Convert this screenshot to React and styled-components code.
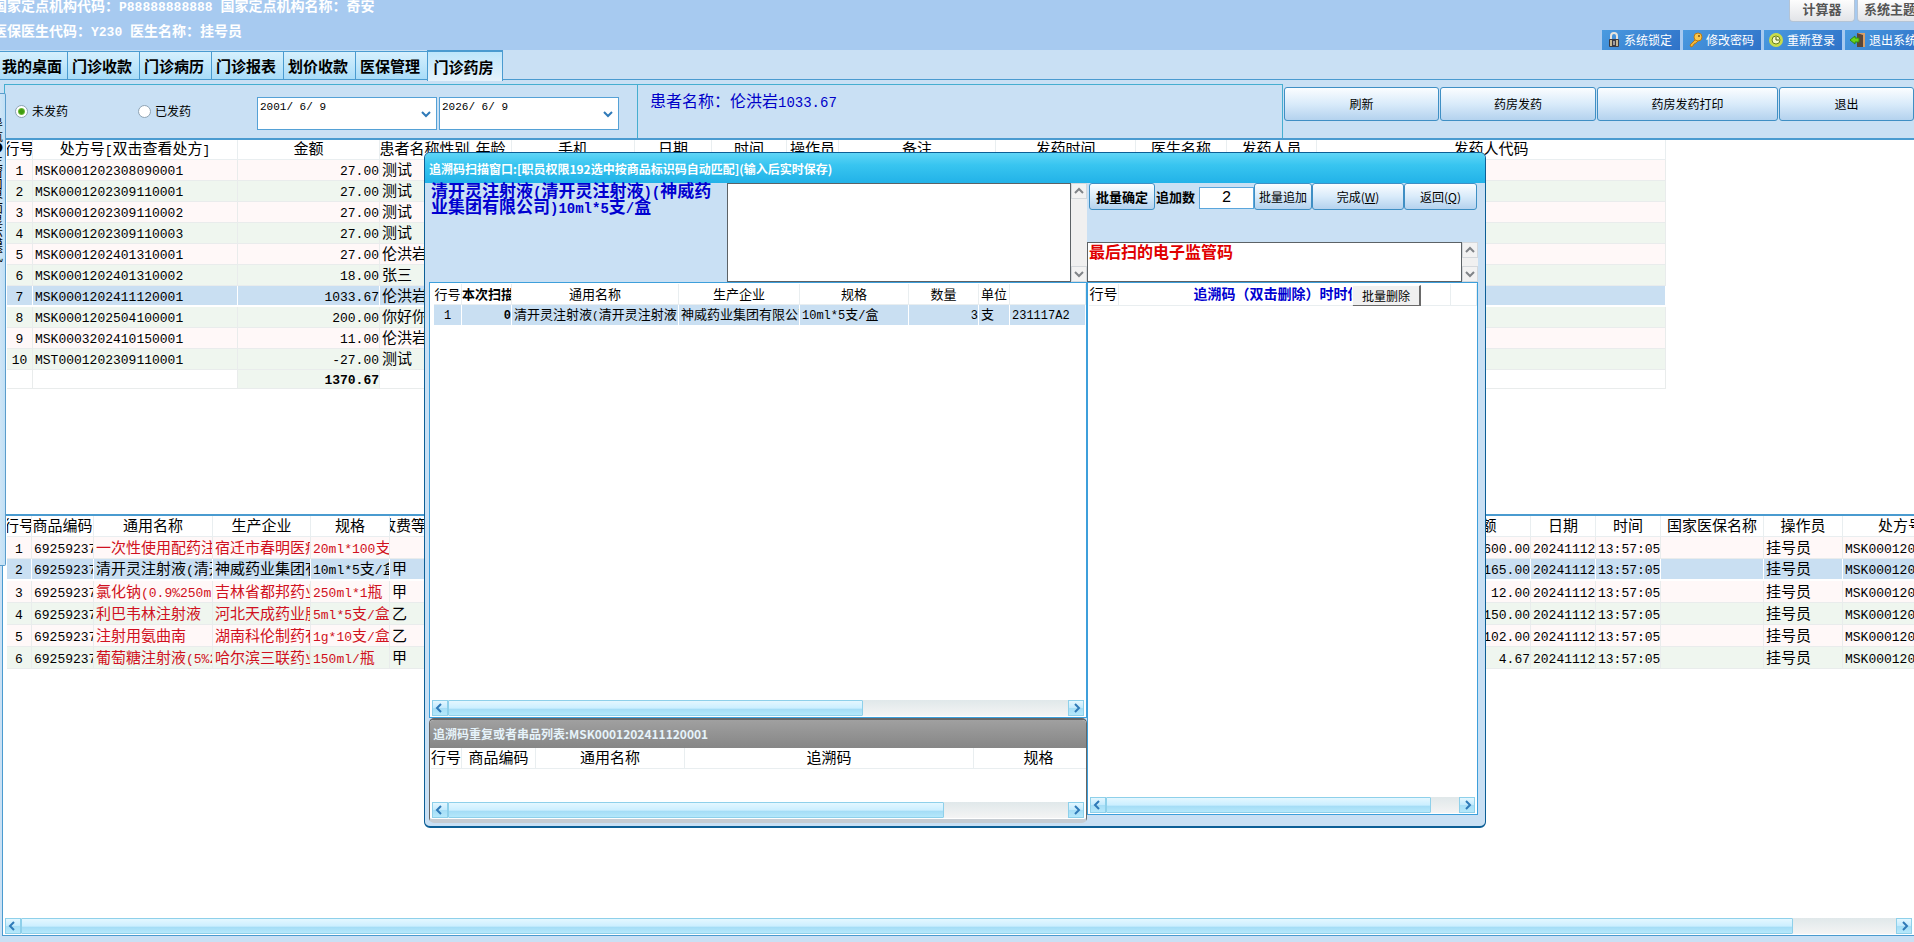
import React from "react";
import styled, { createGlobalStyle, css } from "styled-components";

const song = `"Liberation Serif", "Noto Sans CJK SC", serif`;
const hei = `"Noto Sans CJK SC", sans-serif`;
const mono = `"Liberation Mono", "Noto Sans CJK SC", monospace`;
const panel = "#c9e0f4";
const line = "#4a9bd0";

const Global = createGlobalStyle`
  * { box-sizing: border-box; }
  html, body { margin: 0; height: 100%; overflow: hidden; }
  body { font: 15px/20px ${song}; color: #000; background: ${panel}; }
  button, input, textarea { font: inherit; color: inherit; margin: 0; border-radius: 0; }
  button { cursor: pointer; white-space: nowrap; }
`;

const Latin = styled.span`
  font-family: ${mono};
  font-size: ${(p) => p.$size}px;
  line-height: 1;
  white-space: pre;
`;

/* Latin runs use the half-width face beside the full-width characters. */
function Text({ children, size = 13 }) {
  return String(children)
    .split(/([\x20-\x7e]+)/)
    .filter(Boolean)
    .map((part, i) =>
      /^[\x20-\x7e]/.test(part) ? (
        <Latin key={i} $size={size}>{part}</Latin>
      ) : (
        part
      )
    );
}

/* ---------- shell ---------- */

const Shell = styled.div`
  position: relative;
  display: flex;
  flex-direction: column;
  height: 100vh;
  overflow: hidden;
`;

const Header = styled.header`
  display: flex;
  flex: none;
  justify-content: space-between;
  height: 50px;
  background: #a7caf0;
`;

const Org = styled.div`
  display: flex;
  flex-direction: column;
  gap: 11px;
  margin-left: -7px;
  color: #fff;
  font-size: 14px;
  font-weight: bold;
  line-height: 14px;
  white-space: nowrap;
`;

const HeaderTools = styled.div`
  display: flex;
  flex-direction: column;
  align-items: flex-end;
  justify-content: space-between;
`;

const TopLinks = styled.div`
  display: flex;
  gap: 2px;
  width: 125px;
  overflow: hidden;
`;

const TopLink = styled.button`
  flex: none;
  width: 66px;
  height: 22px;
  padding: 0 0 4px;
  border: 1px solid #b4c4d6;
  border-top: 0;
  border-radius: 0 0 4px 4px;
  background: linear-gradient(#fdfdfd, #e2e4e8);
  color: #555;
  font: bold 13px/18px ${hei};
`;

const ToolLinks = styled.div`
  display: flex;
  gap: 3px;
  width: 312px;
  overflow: hidden;
`;

const ToolLink = styled.button`
  display: flex;
  flex: none;
  align-items: center;
  gap: 3px;
  width: 78px;
  height: 20px;
  padding: 0 0 0 5px;
  border: 0;
  background: linear-gradient(135deg, #4a9be0, #2f72c8);
  color: #fff;
  font: 12px/20px ${hei};
  svg { flex: none; }
`;

const Tabs = styled.nav`
  display: flex;
  flex: none;
  align-items: flex-end;
  height: 30px;
  border-bottom: 1px solid ${line};
`;

const Tab = styled.button`
  width: ${(p) => (p.$active ? 76 : 72)}px;
  height: ${(p) => (p.$active ? 31 : 28)}px;
  margin: ${(p) => (p.$active ? "0 0 -2px -1px" : "0")};
  padding: 0 3px 0 0;
  border: 1px solid ${line};
  border-width: ${(p) => (p.$active ? "2px 1px 0" : "1px 1px 0 0")};
  background: ${(p) => (p.$active ? "linear-gradient(#bde6fb, #e6f3fc)" : "linear-gradient(#d6f0fd, #a9dcf8)")};
  font: bold 15px/26px ${hei};
  &:first-child { width: 68px; }
`;

const Filters = styled.section`
  display: flex;
  flex: none;
  height: 54px;
  margin: 4px 0 0 4px;
`;

const FilterBox = styled.div`
  display: flex;
  width: 634px;
  padding-top: 12px;
  border: 1px solid #45aed0;
  border-width: 1px 1px 0 1px;
`;

const RadioLabel = styled.label`
  display: flex;
  align-items: center;
  gap: 4px;
  width: 123px;
  height: 28px;
  font: 12px/16px ${hei};
  &:first-child { margin-left: 10px; }
  & + & { width: 119px; }
  input {
    appearance: none;
    width: 13px;
    height: 13px;
    margin: 0;
    border: 1px solid #8fa4b4;
    border-radius: 50%;
    background: #fff;
  }
  input:checked { background: radial-gradient(#3f9c0e 0 2px, #6db83a 3px, #fff 4px); }
`;

const DateBox = styled.div`
  display: flex;
  width: 180px;
  height: 33px;
  margin-right: 2px;
  border: 1px solid #55a1d6;
  background: #fff;
  input {
    flex: 1;
    min-width: 0;
    height: 18px;
    padding: 0 2px;
    border: 0;
    background: none;
    font: 11px/18px ${mono};
  }
  button {
    display: flex;
    align-items: center;
    justify-content: center;
    width: 20px;
    padding: 0;
    border: 0;
    background: none;
  }
`;

const Patient = styled.div`
  flex: 1;
  min-width: 0;
  padding: 7px 12px;
  border: 1px solid #45aed0;
  border-width: 1px 1px 0 0;
  color: #0000c8;
  font-size: 16px;
  white-space: nowrap;
`;

const Actions = styled.div`
  display: flex;
  gap: 1px;
  padding: 3px 0 0 1px;
`;

const Push = styled.button`
  flex: none;
  width: ${(p) => p.$w}px;
  height: ${(p) => p.$h || 27}px;
  padding: 0;
  border: 1px solid #3f8fc4;
  border-radius: 3px;
  background: linear-gradient(#fbfdff, #d9ebfa 50%, #b4d2ee);
  font: ${(p) => (p.$bold ? "bold" : "normal")} ${(p) => p.$size || 12}px/20px ${hei};
`;

const Work = styled.main`
  display: flex;
  flex: 1;
  flex-direction: column;
  min-height: 0;
  margin: 0 0 6px 2px;
  border: 1px solid ${line};
  border-width: 0 0 1px 1px;
  background: #fff;
`;

const Upper = styled.section`
  flex: 0 0 376px;
  overflow: hidden;
  padding-left: 4px;
  border-top: 2px solid ${line};
`;

const Lower = styled(Upper)`
  flex: 1;
  min-height: 0;
`;

const SideStrip = styled.aside`
  position: absolute;
  top: 93px;
  left: 0;
  display: flex;
  flex-direction: column;
  align-items: flex-end;
  width: 6px;
  height: 473px;
  padding: 24px 2px 0 0;
  overflow: hidden;
  border: 1px solid #5b9ccb;
  border-left: 0;
  border-radius: 0 2px 2px 0;
  background: linear-gradient(90deg, #cfe5f6, #c0e0f6);
  font: 12px/12px ${hei};
`;

/* ---------- tables ---------- */

const stripe = { pink: "#fff8f8", green: "#eff6ef", blue: "#c9dff2" };

const Grid = styled.table`
  width: ${(p) => p.$w}px;
  table-layout: fixed;
  border-collapse: separate;
  border-spacing: 0;
  font-size: ${(p) => p.$size || 15}px;
  line-height: 19px;
`;

const Th = styled.th`
  height: ${(p) => p.$h || 21}px;
  padding: 0;
  overflow: hidden;
  border: 1px solid #e9eef0;
  border-width: 0 1px 1px 0;
  color: ${(p) => p.$color || "#000"};
  font-weight: ${(p) => (p.$bold ? "bold" : "normal")};
  white-space: nowrap;
`;

const HeadText = styled.span`
  display: flex;
  justify-content: ${(p) => p.$justify || "center"};
`;

const Tr = styled.tr`
  height: ${(p) => p.$h}px;
  background: ${(p) => stripe[p.$tone] || "#fff"};
`;

const Td = styled.td`
  padding: 0 0 0 ${(p) => (p.$align ? 0 : 2)}px;
  overflow: hidden;
  border: 1px solid ${(p) => (p.$sel ? "#fff" : "#e9ecec")};
  border-width: 0 1px 1px 0;
  ${(p) => p.$sel && css`border-bottom-width: 2px;`}
  background: ${(p) => stripe[p.$tone] || "transparent"};
  color: ${(p) => p.$color || "#000"};
  font-weight: ${(p) => (p.$bold ? "bold" : "normal")};
  line-height: 18px;
  text-align: ${(p) => p.$align || "left"};
  white-space: nowrap;
`;

function Cols({ widths }) {
  return <colgroup>{widths.map((w, i) => <col key={i} width={w} />)}</colgroup>;
}

/* ---------- scroll bars ---------- */

const HBar = styled.div`
  display: flex;
  flex: none;
  height: 16px;
  margin: 0 2px 1px 2px;
  background: linear-gradient(#e0e8ea, #f4f4f4);
`;

const HEnd = styled.button`
  display: flex;
  flex: none;
  align-items: center;
  justify-content: center;
  width: 16px;
  padding: 0;
  border: 1px solid #8ed0ea;
  background: linear-gradient(#e4f7ff, #c2eafd 50%, #a5ddf6 50%, #b5e8fb);
`;

const HTrack = styled.div`flex: 1;`;

const HThumb = styled.div`
  width: ${(p) => p.$part}%;
  height: 16px;
  border: 1px solid #8ed0ea;
  border-radius: 1px;
  background: linear-gradient(#e4f7ff, #ccefff 50%, #a5ddf6 60%, #b5e8fb);
`;

const VBar = styled.div`
  display: flex;
  flex: none;
  flex-direction: column;
  justify-content: space-between;
  width: 16px;
  background: #f0f0f0;
`;

const VEnd = styled.button`
  display: flex;
  align-items: center;
  justify-content: center;
  height: 16px;
  padding: 0;
  border: 1px solid #d4d8dc;
  background: #f2f2f2;
`;

const chevrons = {
  left: "M6 1 L2 5 L6 9",
  right: "M4 1 L8 5 L4 9",
  up: "M1 7 L5 3 L9 7",
  down: "M1 3 L5 7 L9 3",
};

function Chevron({ dir, color = "#2f7ab8" }) {
  return (
    <svg width="10" height="10" viewBox="0 0 10 10" fill="none" stroke={color} strokeWidth="2">
      <path d={chevrons[dir]} />
    </svg>
  );
}

function HScroll({ part }) {
  return (
    <HBar>
      <HEnd aria-label="向左"><Chevron dir="left" /></HEnd>
      <HTrack><HThumb $part={part} /></HTrack>
      <HEnd aria-label="向右"><Chevron dir="right" /></HEnd>
    </HBar>
  );
}

function VScroll() {
  return (
    <VBar>
      <VEnd aria-label="向上"><Chevron dir="up" color="#808488" /></VEnd>
      <VEnd aria-label="向下"><Chevron dir="down" color="#808488" /></VEnd>
    </VBar>
  );
}

/* ---------- scan window ---------- */

const Window = styled.section`
  position: absolute;
  top: 152px;
  left: 424px;
  display: flex;
  flex-direction: column;
  width: 1062px;
  height: 676px;
  border: 1px solid #0d5f96;
  border-bottom-width: 2px;
  border-radius: 6px;
  overflow: hidden;
  background: ${panel};
`;

const WindowTitle = styled.h1`
  flex: none;
  height: 30px;
  margin: 0;
  padding: 2px 4px 0;
  background: linear-gradient(#5fd5f7, #38c5f0 40%, #22b2e8);
  color: #fff;
  font: bold 12px/28px ${hei};
  white-space: nowrap;
`;

const WindowBody = styled.div`
  display: flex;
  flex: 1;
  min-height: 0;
  padding: 0 7px 3px 4px;
`;

const Left = styled.div`
  display: flex;
  flex: none;
  flex-direction: column;
  width: 658px;
`;

const Right = styled.div`
  display: flex;
  flex: 1;
  flex-direction: column;
  min-width: 0;
  padding-bottom: 8px;
`;

const ScanTop = styled.div`
  display: flex;
  height: 99px;
`;

const Drug = styled.p`
  flex: none;
  width: 298px;
  margin: 0;
  padding: 1px 0 0 2px;
  color: #0000d0;
  font-size: 17px;
  font-weight: bold;
  line-height: 16px;
`;

const Area = styled.textarea`
  flex: 1;
  min-width: 0;
  padding: 0 1px;
  border: 1px solid #5c6266;
  outline: 0;
  overflow: hidden;
  resize: none;
  background: #fff;
  color: #e00000;
  font: bold 16px/16px ${hei};
`;

const Frame = styled.div`
  display: flex;
  flex: 1;
  flex-direction: column;
  justify-content: space-between;
  min-height: 0;
  padding-top: 1px;
  border: 1px solid #3d9fdb;
  background: #fff;
`;

const GridClip = styled.div`
  position: relative;
  overflow: hidden;
  padding-left: ${(p) => p.$pad || 0}px;
`;

const Repeat = styled.section`
  display: flex;
  flex-direction: column;
  height: 105px;
  border: 1px solid #666;
  border-width: 2px 1px 0;
  border-bottom: 4px solid #c6ccd2;
  border-radius: 5px;
  overflow: hidden;
  background: #fff;
`;

const RepeatTitle = styled.h2`
  flex: none;
  height: 28px;
  margin: 0;
  padding-left: 3px;
  background: linear-gradient(#a0a0a0, #868686);
  color: #e6f3fa;
  font: bold 12px/28px ${hei};
`;

const RepeatBody = styled.div`
  display: flex;
  flex: 1;
  flex-direction: column;
  justify-content: space-between;
`;

const ScanTools = styled.div`
  display: flex;
  height: 59px;
  padding-left: 2px;
`;

const CountLabel = styled.label`
  display: flex;
  align-items: flex-start;
  width: 99px;
  padding-left: 1px;
  font: bold 13px/28px ${hei};
  white-space: nowrap;
  input {
    width: 55px;
    height: 22px;
    margin: 4px 0 0 auto;
    padding: 0;
    border: 1px solid #5aa6dc;
    background: #fff;
    font: 16px/20px ${mono};
    text-align: center;
  }
`;

const LastCode = styled.div`
  display: flex;
  height: 40px;
`;

const DeleteAll = styled.button`
  position: absolute;
  top: 1px;
  left: 264px;
  width: 69px;
  height: 22px;
  padding: 0;
  border: 1px solid #fff;
  border-right: 2px solid #6a6a6a;
  border-bottom: 2px solid #6a6a6a;
  background: #f0f0f0;
  font: 12px/18px ${hei};
`;

/* ---------- icons ---------- */

const LockIcon = () => (
  <svg width="14" height="16" viewBox="0 0 14 16">
    <path d="M4 8V4a3 3 0 0 1 6 0v4" fill="none" stroke="#e8e4dc" strokeWidth="2" />
    <rect x="2" y="7" width="10" height="8" rx="1" fill="#3c3c44" />
    <path d="M4 8v6M10 8v6" stroke="#c8b890" strokeWidth="2" />
    <path d="M7 9v4" stroke="#fff" strokeWidth="1" />
  </svg>
);

const KeyIcon = () => (
  <svg width="15" height="16" viewBox="0 0 15 16">
    <path d="M9 6 2 13l1 2 2-1 1-2 2-1 3-3" fill="#f4b93c" stroke="#b97a14" strokeWidth="1" />
    <circle cx="10" cy="5" r="4" fill="#f9c74b" stroke="#b97a14" />
    <circle cx="11" cy="4" r="1" fill="#7a5214" />
  </svg>
);

const ReloginIcon = () => (
  <svg width="15" height="16" viewBox="0 0 15 16">
    <circle cx="7" cy="8" r="7" fill="#c9dc4a" />
    <circle cx="7" cy="8" r="4" fill="#f5f8c8" stroke="#68801c" strokeWidth="1" />
    <path d="M7 5v3h3" fill="none" stroke="#445a10" strokeWidth="1" />
  </svg>
);

const ExitIcon = () => (
  <svg width="16" height="16" viewBox="0 0 16 16">
    <path d="M7 1h8v14H7z" fill="#d8a068" />
    <path d="M7 1l6 2v12H7z" fill="#5b4638" />
    <path d="M0 8l5-4v2h4v4H5v2z" fill="#6ad41c" stroke="#2f8a10" strokeWidth="1" />
  </svg>
);

/* ---------- data ---------- */

const tabs = ["我的桌面", "门诊收款", "门诊病历", "门诊报表", "划价收款", "医保管理", "门诊药房"];

const rxCols = [
  ["行号", 26], ["处方号[双击查看处方]", 205], ["金额", 142], ["患者名称", 60], ["性别", 30], ["年龄", 42],
  ["手机", 123], ["日期", 77], ["时间", 75], ["操作员", 52], ["备注", 157], ["发药时间", 140],
  ["医生名称", 91], ["发药人员", 90], ["发药人代码", 349],
];

const rxRows = [
  ["MSK0001202308090001", "27.00", "测试"],
  ["MSK0001202309110001", "27.00", "测试"],
  ["MSK0001202309110002", "27.00", "测试"],
  ["MSK0001202309110003", "27.00", "测试"],
  ["MSK0001202401310001", "27.00", "伦洪岩"],
  ["MSK0001202401310002", "18.00", "张三"],
  ["MSK0001202411120001", "1033.67", "伦洪岩"],
  ["MSK0001202504100001", "200.00", "你好你"],
  ["MSK0003202410150001", "11.00", "伦洪岩"],
  ["MST0001202309110001", "-27.00", "测试"],
];

const itemCols = [
  ["行号", 25], ["商品编码", 62], ["通用名称", 119], ["生产企业", 98], ["规格", 79], ["收费等级", 43],
  ["", 1000], ["金额", 98], ["日期", 65], ["时间", 65], ["国家医保名称", 103], ["操作员", 79], ["处方号", 116],
];

const itemRows = [
  ["一次性使用配药注射器", "宿迁市春明医疗器械", "20ml*100支", "", "600.00"],
  ["清开灵注射液(清开灵注射液)", "神威药业集团有限公司", "10ml*5支/盒", "甲", "165.00"],
  ["氯化钠(0.9%250ml)", "吉林省都邦药业", "250ml*1瓶", "甲", "12.00"],
  ["利巴韦林注射液", "河北天成药业股份", "5ml*5支/盒", "乙", "150.00"],
  ["注射用氨曲南", "湖南科伦制药有限公司", "1g*10支/盒", "乙", "102.00"],
  ["葡萄糖注射液(5%250ml)", "哈尔滨三联药业", "150ml/瓶", "甲", "4.67"],
];

const scanCols = [
  ["行号", 28], ["本次扫描", 50], ["通用名称", 167], ["生产企业", 121], ["规格", 109], ["数量", 70], ["单位", 31], ["", 76],
];

function tone(i, selected) {
  if (i === selected) return "blue";
  return i % 2 ? "green" : "pink";
}

function Prescriptions() {
  const widths = rxCols.map((c) => c[1]);
  const total = widths.reduce((a, b) => a + b, 0);
  return (
    <Grid $w={total}>
      <Cols widths={widths} />
      <thead>
        <tr>
          {rxCols.map(([t]) => (
            <Th key={t} $h={20}><HeadText><span><Text>{t}</Text></span></HeadText></Th>
          ))}
        </tr>
      </thead>
      <tbody>
        {rxRows.map(([code, sum, name], i) => {
          const sel = i === 6;
          return (
            <Tr key={code + i} $h={21} $tone={tone(i, 6)}>
              <Td $align="center" $sel={sel}><Text>{i + 1}</Text></Td>
              <Td $sel={sel}><Text>{code}</Text></Td>
              <Td $align="right" $sel={sel}><Text>{sum}</Text></Td>
              <Td $sel={sel}>{name}</Td>
              {rxCols.slice(4).map(([t]) => <Td key={t} $sel={sel} />)}
            </Tr>
          );
        })}
        <Tr $h={19}>
          <Td />
          <Td />
          <Td $align="right" $bold $tone="green"><Text>1370.67</Text></Td>
          <Td colSpan={12} />
        </Tr>
      </tbody>
    </Grid>
  );
}

function Items() {
  const widths = itemCols.map((c) => c[1]);
  const total = widths.reduce((a, b) => a + b, 0);
  return (
    <Grid $w={total}>
      <Cols widths={widths} />
      <thead>
        <tr>
          {itemCols.map(([t, w]) => (
            <Th key={t + w}><HeadText>{t}</HeadText></Th>
          ))}
        </tr>
      </thead>
      <tbody>
        {itemRows.map(([name, maker, spec, level, sum], i) => {
          const sel = i === 1;
          const color = sel ? "#000" : "#d01020";
          return (
            <Tr key={name} $h={22} $tone={tone(i, 1)}>
              <Td $align="center" $sel={sel}><Text>{i + 1}</Text></Td>
              <Td $sel={sel}><Text>69259237</Text></Td>
              <Td $sel={sel} $color={color}><Text>{name}</Text></Td>
              <Td $sel={sel} $color={color}><Text>{maker}</Text></Td>
              <Td $sel={sel} $color={color}><Text>{spec}</Text></Td>
              <Td $sel={sel}>{level}</Td>
              <Td $sel={sel} />
              <Td $align="right" $sel={sel}><Text>{sum}</Text></Td>
              <Td $sel={sel}><Text>20241112</Text></Td>
              <Td $sel={sel}><Text>13:57:05</Text></Td>
              <Td $sel={sel} />
              <Td $sel={sel}>挂号员</Td>
              <Td $sel={sel}><Text>MSK0001202411120001</Text></Td>
            </Tr>
          );
        })}
      </tbody>
    </Grid>
  );
}

function ScanTable() {
  return (
    <GridClip $pad={4}>
      <Grid $w={652} $size={13}>
        <Cols widths={scanCols.map((c) => c[1])} />
        <thead>
          <tr>
            {scanCols.map(([t, w], i) => (
              <Th key={w} $h={21} $bold={i === 1}>
                <HeadText $justify={i === 1 ? "flex-start" : "center"}>{t}</HeadText>
              </Th>
            ))}
          </tr>
        </thead>
        <tbody>
          <Tr $h={22} $tone="blue">
            <Td $align="center" $sel><Text size={12}>1</Text></Td>
            <Td $align="right" $sel $bold><Text size={12}>0</Text></Td>
            <Td $sel><Text size={11}>清开灵注射液(清开灵注射液)</Text></Td>
            <Td $sel>神威药业集团有限公司</Td>
            <Td $sel><Text size={12}>10ml*5支/盒</Text></Td>
            <Td $align="right" $sel><Text size={12}>3</Text></Td>
            <Td $sel>支</Td>
            <Td $sel><Text size={12}>231117A2</Text></Td>
          </Tr>
        </tbody>
      </Grid>
    </GridClip>
  );
}

function ScanWindow() {
  return (
    <Window>
      <WindowTitle>追溯码扫描窗口:[职员权限192选中按商品标识码自动匹配](输入后实时保存)</WindowTitle>
      <WindowBody>
        <Left>
          <ScanTop>
            <Drug>
              <Text size={14}>清开灵注射液(清开灵注射液)(神威药</Text>
              <br />
              <Text size={14}>业集团有限公司)10ml*5支/盒</Text>
            </Drug>
            <Area aria-label="追溯码" />
            <VScroll />
          </ScanTop>
          <Frame>
            <ScanTable />
            <HScroll part={67} />
          </Frame>
          <Repeat>
            <RepeatTitle>追溯码重复或者串品列表:MSK0001202411120001</RepeatTitle>
            <RepeatBody>
              <GridClip $pad={1}>
                <Grid $w={673}>
                  <Cols widths={[31, 74, 149, 289, 130]} />
                  <thead>
                    <tr>
                      {["行号", "商品编码", "通用名称", "追溯码", "规格"].map((t) => (
                        <Th key={t}><HeadText>{t}</HeadText></Th>
                      ))}
                    </tr>
                  </thead>
                </Grid>
              </GridClip>
              <HScroll part={80} />
            </RepeatBody>
          </Repeat>
        </Left>
        <Right>
          <ScanTools>
            <Push $w={66} $size={13} $bold>批量确定</Push>
            <CountLabel>
              追加数
              <input defaultValue="2" />
            </CountLabel>
            <Push $w={58}>批量追加</Push>
            <Push $w={92}>完成(<u>W</u>)</Push>
            <Push $w={73}>返回(<u>Q</u>)</Push>
          </ScanTools>
          <LastCode>
            <Area aria-label="监管码" defaultValue="最后扫的电子监管码" />
            <VScroll />
          </LastCode>
          <Frame>
            <GridClip $pad={1}>
              <Grid $w={388} $size={14}>
                <Cols widths={[30, 332, 26]} />
                <thead>
                  <tr>
                    <Th $h={22}>行号</Th>
                    <Th $h={22} $bold $color="#0000d0"><HeadText>追溯码（双击删除）时时保存</HeadText></Th>
                    <Th $h={22} />
                  </tr>
                </thead>
              </Grid>
              <DeleteAll>批量删除</DeleteAll>
            </GridClip>
            <HScroll part={92} />
          </Frame>
        </Right>
      </WindowBody>
    </Window>
  );
}

export default function App() {
  return (
    <Shell>
      <Global />
      <Header>
        <Org>
          <span><Text>国家定点机构代码：P88888888888 国家定点机构名称：奇安</Text></span>
          <span><Text>医保医生代码：Y230 医生名称：挂号员</Text></span>
        </Org>
        <HeaderTools>
          <TopLinks>
            <TopLink>计算器</TopLink>
            <TopLink>系统主题</TopLink>
          </TopLinks>
          <ToolLinks>
            <ToolLink><LockIcon />系统锁定</ToolLink>
            <ToolLink><KeyIcon />修改密码</ToolLink>
            <ToolLink><ReloginIcon />重新登录</ToolLink>
            <ToolLink><ExitIcon />退出系统</ToolLink>
          </ToolLinks>
        </HeaderTools>
      </Header>
      <Tabs>
        {tabs.map((t, i) => <Tab key={t} $active={i === 6}>{t}</Tab>)}
      </Tabs>
      <Filters>
        <FilterBox>
          <RadioLabel><input type="radio" name="state" defaultChecked />未发药</RadioLabel>
          <RadioLabel><input type="radio" name="state" />已发药</RadioLabel>
          <DateBox>
            <input aria-label="开始日期" defaultValue="2001/ 6/ 9" />
            <button aria-label="选择开始日期"><Chevron dir="down" /></button>
          </DateBox>
          <DateBox>
            <input aria-label="结束日期" defaultValue="2026/ 6/ 9" />
            <button aria-label="选择结束日期"><Chevron dir="down" /></button>
          </DateBox>
        </FilterBox>
        <Patient><Text size={14}>患者名称：伦洪岩1033.67</Text></Patient>
        <Actions>
          <Push $w={155} $h={34}>刷新</Push>
          <Push $w={156} $h={34}>药房发药</Push>
          <Push $w={181} $h={34}>药房发药打印</Push>
          <Push $w={135} $h={34}>退出</Push>
        </Actions>
      </Filters>
      <Work>
        <Upper><Prescriptions /></Upper>
        <Lower><Items /></Lower>
        <HScroll part={94.5} />
      </Work>
      <SideStrip>
        {[..."导航●主窗口界面显示模式"].map((c, i) => <span key={i}>{c}</span>)}
      </SideStrip>
      <ScanWindow />
    </Shell>
  );
}
